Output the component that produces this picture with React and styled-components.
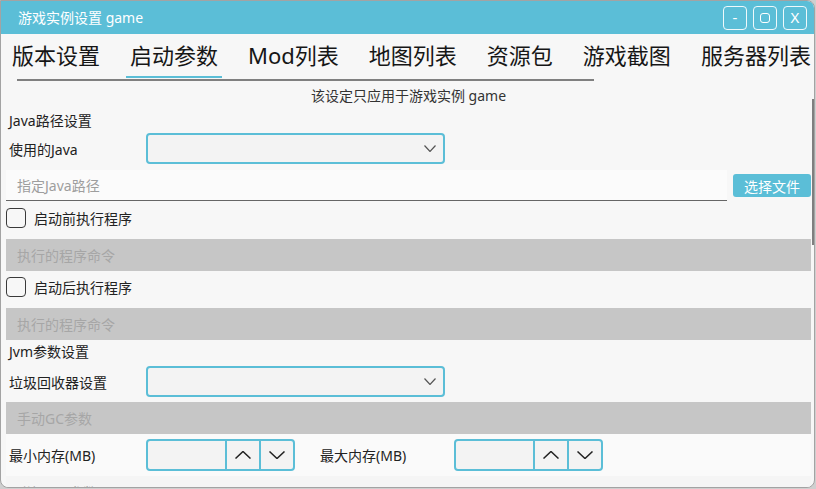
import React from "react";
import styled, { createGlobalStyle } from "styled-components";

const ACCENT = "#5bbed7";
const FONT = `"Noto Sans", "Noto Sans CJK SC", sans-serif`;

const Global = createGlobalStyle`
  html, body { margin: 0; padding: 0; background: #cfcfcf; }
  body { font-family: ${FONT}; }
  * { box-sizing: border-box; }
`;

const Window = styled.div`
  width: 815px;
  height: 488px;
  border: 1px solid #a3a3a3;
  border-radius: 0 8px 8px 8px;
  background: #f7f7f7;
  overflow: hidden;
  display: flex;
  flex-direction: column;
`;

const TitleBar = styled.div`
  height: 33px;
  flex: none;
  background: ${ACCENT};
  display: flex;
  align-items: center;
  padding: 0 7px 0 17px;
`;

const Title = styled.div`
  flex: 1;
  color: #fff;
  font-size: 14px;
  line-height: 20px;
`;

const WinButtons = styled.div`
  display: flex;
  gap: 6px;
`;

const WinButton = styled.div`
  width: 24px;
  height: 24px;
  border: 1px solid rgba(255, 255, 255, 0.9);
  border-radius: 4px;
  color: #fff;
  font-size: 15px;
  display: flex;
  align-items: center;
  justify-content: center;
  line-height: 1;
`;

const MaxGlyph = styled.span`
  width: 10px;
  height: 10px;
  border: 1.5px solid #fff;
  border-radius: 3px;
`;

const TabRow = styled.div`
  display: flex;
  gap: 22px;
  padding-left: 7px;
  height: 44px;
  flex: none;
`;

const Tab = styled.div`
  padding: 0 4px 2px;
  display: flex;
  align-items: center;
  font-size: 22px;
  color: #161616;
  white-space: nowrap;
  border-bottom: 2px solid ${(p) => (p.$active ? ACCENT : "transparent")};
`;

const Divider = styled.div`
  flex: none;
  margin: 1px 0 0 16px;
  width: 577px;
  height: 2px;
  background: #808080;
`;

const Content = styled.div`
  flex: 1;
  position: relative;
  overflow: hidden;
  padding: 0 3px 0 5px;
  display: flex;
  flex-direction: column;
`;

const ScrollThumb = styled.div`
  position: absolute;
  right: 0;
  top: 18px;
  width: 2px;
  height: 146px;
  background: #7f7f7f;
`;

const Notice = styled.div`
  margin-top: 5px;
  height: 20px;
  line-height: 20px;
  text-align: center;
  font-size: 14px;
  color: #333;
`;

const SectionTitle = styled.div`
  margin-top: ${(p) => p.$mt}px;
  height: 20px;
  line-height: 20px;
  padding-left: 3px;
  font-size: 14px;
  color: #222;
`;

const FormRow = styled.div`
  margin-top: ${(p) => p.$mt}px;
  display: flex;
  align-items: center;
  height: ${(p) => p.$h || 31}px;
`;

const Label = styled.div`
  width: ${(p) => p.$w}px;
  margin-left: ${(p) => p.$ml || 0}px;
  padding-left: 3px;
  flex: none;
  font-size: 14px;
  color: #222;
`;

const Select = styled.div`
  width: 299px;
  height: 31px;
  border: 2px solid ${ACCENT};
  border-radius: 4px;
  background: #f3f3f3;
  display: flex;
  align-items: center;
  justify-content: flex-end;
  padding-right: 7px;
`;

const PathRow = styled.div`
  margin-top: 6px;
  height: 31px;
  display: flex;
  align-items: center;
`;

const PathInput = styled.div`
  width: 721px;
  height: 31px;
  background: #fbfbfb;
  border-bottom: 1.5px solid #666;
  display: flex;
  align-items: center;
  padding-left: 11px;
  font-size: 14px;
  color: #9e9e9e;
`;

const FileButton = styled.div`
  margin-left: 6px;
  width: 78px;
  height: 23px;
  border-radius: 3px;
  background: ${ACCENT};
  color: #fff;
  font-size: 14px;
  display: flex;
  align-items: center;
  justify-content: center;
`;

const CheckRow = styled.div`
  margin-top: ${(p) => p.$mt}px;
  height: 20px;
  display: flex;
  align-items: center;
  gap: 8px;
  font-size: 14px;
  color: #222;
`;

const CheckBox = styled.div`
  width: 20px;
  height: 20px;
  border: 1.5px solid #3a3a3a;
  border-radius: 4px;
`;

const GrayField = styled.div`
  margin-top: ${(p) => p.$mt}px;
  height: 32px;
  flex: none;
  background: #c6c6c6;
  display: flex;
  align-items: center;
  padding-left: 11px;
  font-size: 14px;
  color: #a6a6a6;
`;

const SpinBand = styled.div`
  padding: 5px 0;
  background: #fafafa;
  display: flex;
  align-items: center;
  flex: none;
`;

const Spinner = styled.div`
  width: 149px;
  height: 32px;
  border: 2px solid ${ACCENT};
  border-radius: 4px;
  background: #f3f3f3;
  display: flex;
`;

const SpinInput = styled.div`
  flex: 1;
`;

const SpinButton = styled.div`
  width: 34px;
  border-left: 2px solid ${ACCENT};
  display: flex;
  align-items: center;
  justify-content: center;
`;

const TextField = styled.div`
  height: 31px;
  flex: none;
  background: #f5f5f5;
  display: flex;
  align-items: center;
  padding-left: 11px;
  font-size: 14px;
  color: #9e9e9e;
`;

const Chevron = ({ up, w = 12, h = 7, color = "#555", sw = 1.2 }) => (
  <svg width={w} height={h} viewBox={`0 0 ${w} ${h}`} fill="none">
    <polyline
      points={
        up
          ? `0.5,${h - 0.5} ${w / 2},0.5 ${w - 0.5},${h - 0.5}`
          : `0.5,0.5 ${w / 2},${h - 0.5} ${w - 0.5},0.5`
      }
      stroke={color}
      strokeWidth={sw}
    />
  </svg>
);

const SpinBox = () => (
  <Spinner>
    <SpinInput />
    <SpinButton>
      <Chevron up w={16} h={8} color="#222" sw={1.5} />
    </SpinButton>
    <SpinButton>
      <Chevron w={16} h={8} color="#222" sw={1.5} />
    </SpinButton>
  </Spinner>
);

const tabs = ["版本设置", "启动参数", "Mod列表", "地图列表", "资源包", "游戏截图", "服务器列表"];

export default function App() {
  return (
    <>
      <Global />
      <Window>
        <TitleBar>
          <Title>游戏实例设置 game</Title>
          <WinButtons>
            <WinButton>-</WinButton>
            <WinButton>
              <MaxGlyph />
            </WinButton>
            <WinButton>X</WinButton>
          </WinButtons>
        </TitleBar>
        <TabRow>
          {tabs.map((t, i) => (
            <Tab key={t} $active={i === 1}>
              {t}
            </Tab>
          ))}
        </TabRow>
        <Divider />
        <Content>
          <ScrollThumb />
          <Notice>该设定只应用于游戏实例 game</Notice>
          <SectionTitle $mt={5}>Java路径设置</SectionTitle>
          <FormRow $mt={2}>
            <Label $w={140}>使用的Java</Label>
            <Select>
              <Chevron />
            </Select>
          </FormRow>
          <PathRow>
            <PathInput>指定Java路径</PathInput>
            <FileButton>选择文件</FileButton>
          </PathRow>
          <CheckRow $mt={7}>
            <CheckBox />
            启动前执行程序
          </CheckRow>
          <GrayField $mt={11}>执行的程序命令</GrayField>
          <CheckRow $mt={6}>
            <CheckBox />
            启动后执行程序
          </CheckRow>
          <GrayField $mt={11}>执行的程序命令</GrayField>
          <SectionTitle $mt={2}>Jvm参数设置</SectionTitle>
          <FormRow $mt={4}>
            <Label $w={140}>垃圾回收器设置</Label>
            <Select>
              <Chevron />
            </Select>
          </FormRow>
          <GrayField $mt={5}>手动GC参数</GrayField>
          <SpinBand>
            <Label $w={140}>最小内存(MB)</Label>
            <SpinBox />
            <Label $w={137} $ml={22}>最大内存(MB)</Label>
            <SpinBox />
          </SpinBand>
          <TextField>附加Jvm参数</TextField>
        </Content>
      </Window>
    </>
  );
}
